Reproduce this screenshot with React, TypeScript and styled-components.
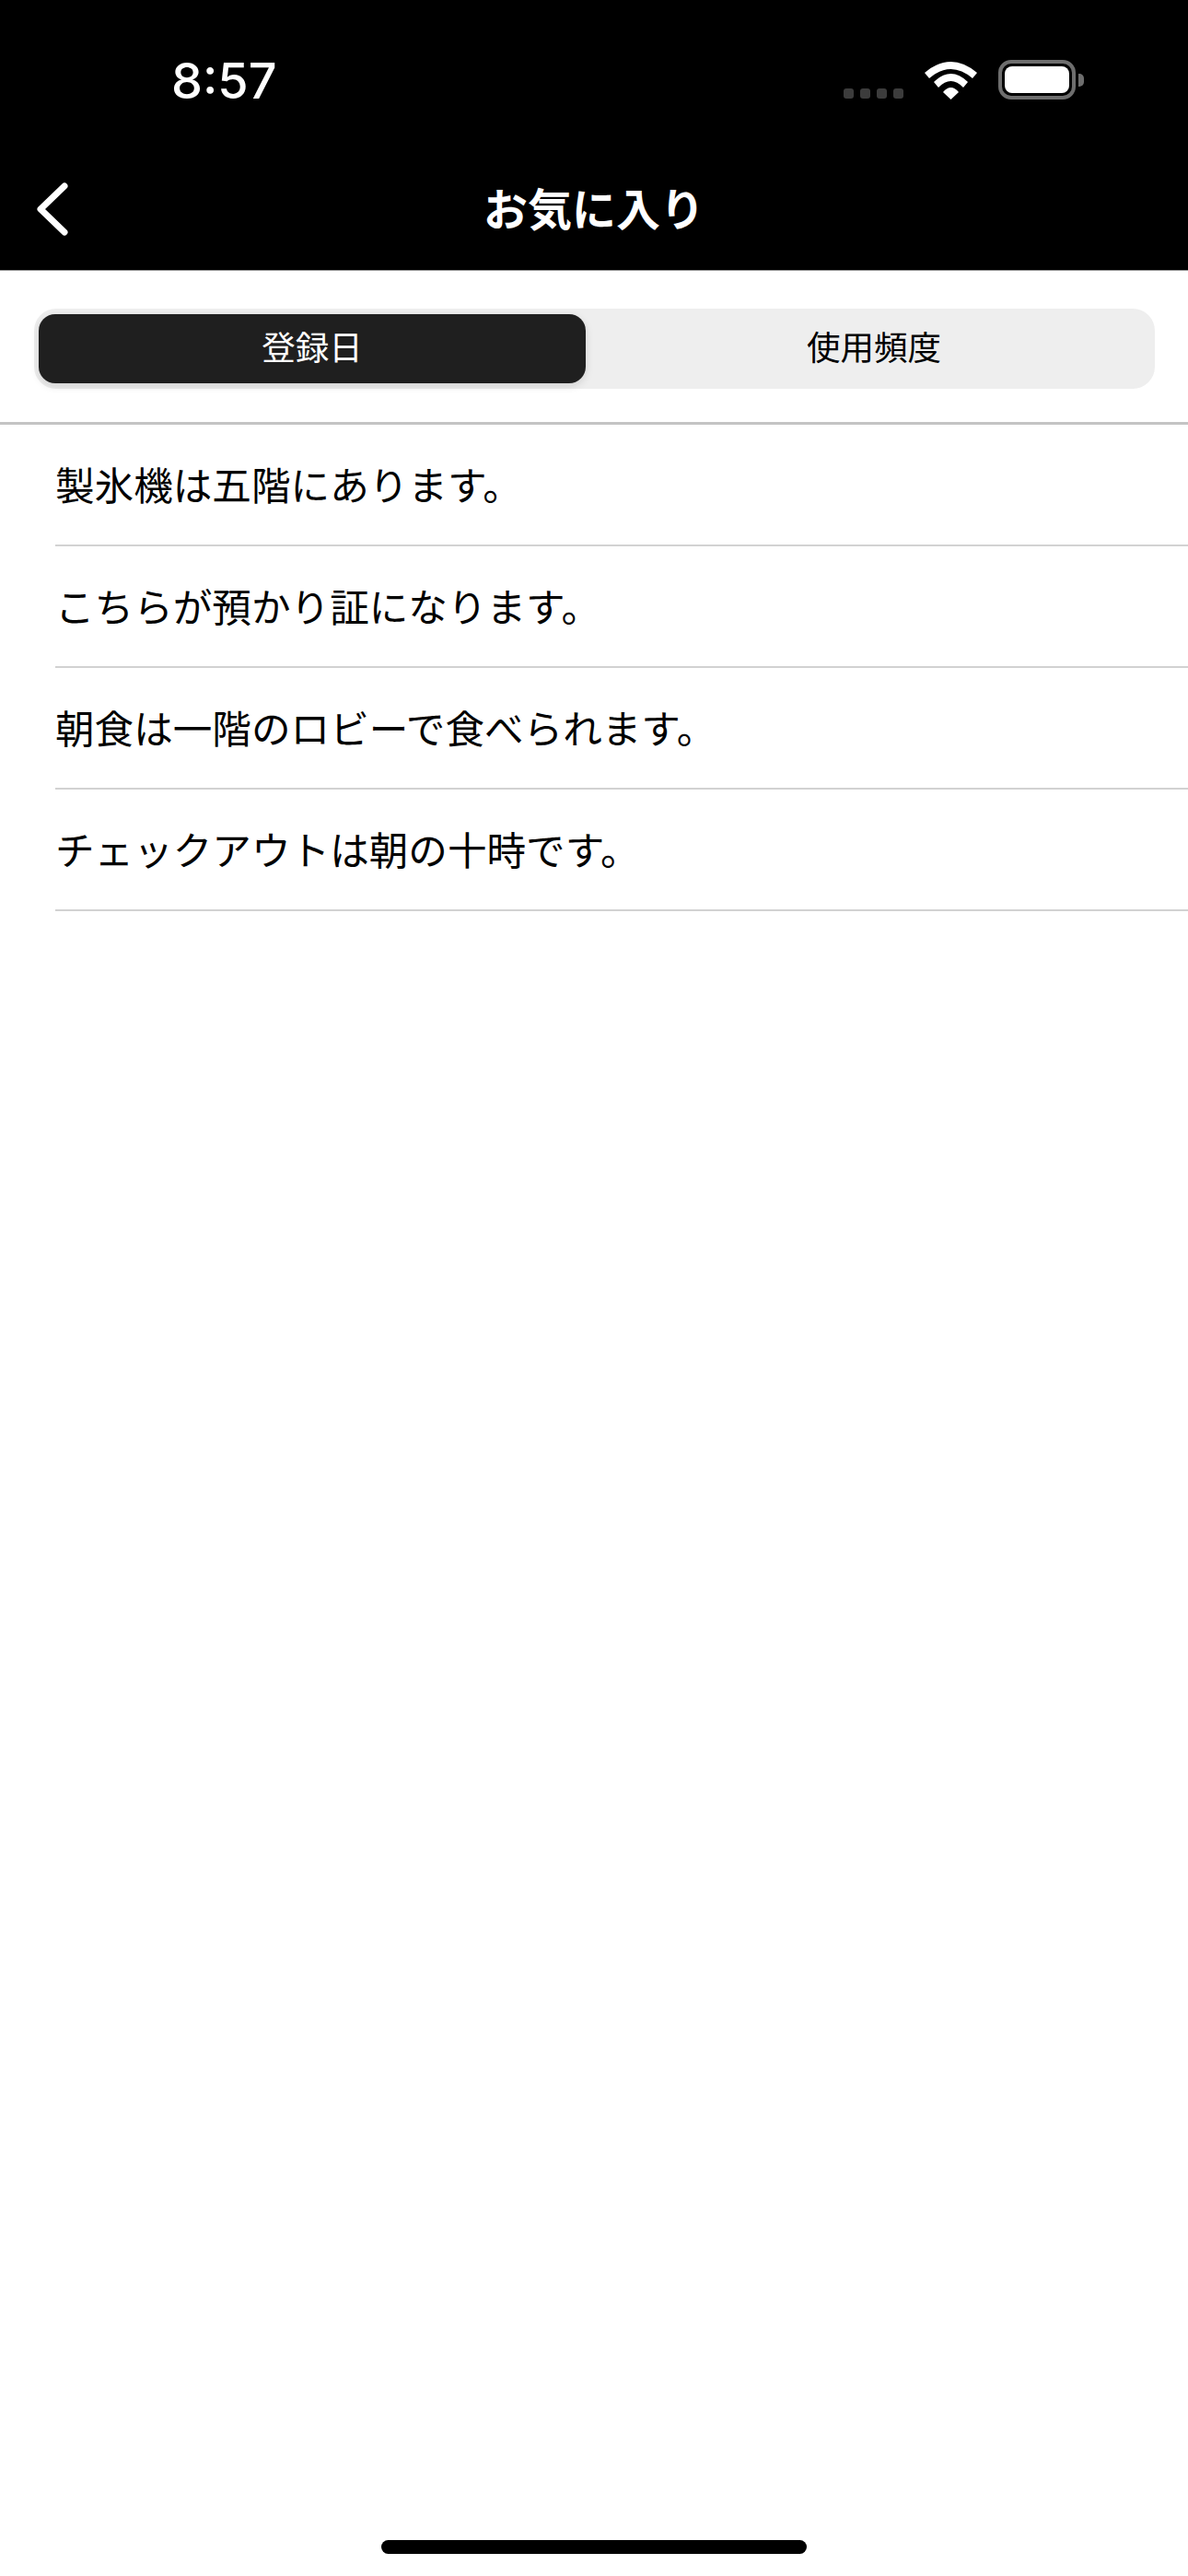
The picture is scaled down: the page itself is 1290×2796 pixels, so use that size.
import React from 'react';
import styled, { createGlobalStyle } from 'styled-components';

const GlobalStyle = createGlobalStyle`
  html, body { margin: 0; padding: 0; background: #fff; }
  * { box-sizing: border-box; }
`;

const Page = styled.div`
  display: flex;
  flex-direction: column;
  width: 1290px;
  height: 2796px;
  background: #fff;
  font-family: "Noto Sans CJK JP", "Liberation Sans", sans-serif;
  color: #000;
  overflow: hidden;
`;

const Header = styled.header`
  background: #000;
  height: 294px;
  border-bottom: 1px solid #9a9a9a;
  flex: none;
`;

const StatusBar = styled.div`
  display: flex;
  justify-content: space-between;
  align-items: flex-start;
  height: 160px;
  padding: 0 113px 0 186px;
`;

const Time = styled.div`
  font-family: Inter, "Liberation Sans", sans-serif;
  font-size: 54px;
  font-weight: 500;
  line-height: 54px;
  color: #fff;
  margin-top: 61px;
`;

const StatusIcons = styled.div`
  display: flex;
  align-items: flex-end;
  gap: 23px;
  margin-top: 65px;
`;

const Signal = styled.div`
  display: flex;
  gap: 7px;
  margin-bottom: 1px;
`;

const SignalDot = styled.span`
  width: 11px;
  height: 11px;
  border-radius: 3px;
  background: #3c3c3c;
`;

const Battery = styled.div`
  display: flex;
  align-items: center;
  gap: 3px;
`;

const BatteryBody = styled.div`
  display: flex;
  width: 84px;
  height: 43px;
  padding: 3px 3px;
  border: 4px solid #6e6e6e;
  border-radius: 14px;
`;

const BatteryFill = styled.div`
  flex: 1;
  background: #fff;
  border-radius: 8px;
`;

const BatteryCap = styled.div`
  width: 6px;
  height: 14px;
  background: #6e6e6e;
  border-radius: 0 5px 5px 0;
`;

const NavBar = styled.nav`
  display: grid;
  grid-template-columns: 1fr auto 1fr;
  align-items: center;
  height: 133px;
  padding: 0 40px;
`;

const BackButton = styled.button`
  display: flex;
  width: 34px;
  padding: 0;
  border: 0;
  background: none;
`;

const Title = styled.h1`
  margin: 0 0 6px;
  font-size: 48px;
  font-weight: 600;
  line-height: 70px;
  color: #fff;
`;

const SegmentWrap = styled.div`
  flex: none;
  height: 167px;
  padding: 41px 36px 0 37px;
  border-bottom: 3px solid #c4c4c4;
`;

const Segment = styled.div`
  display: grid;
  grid-template-columns: 594px 1fr;
  height: 87px;
  padding: 6px 0 6px 5px;
  background: #eeeeee;
  border-radius: 24px;
`;

const SegmentItem = styled.div<{ $active?: boolean }>`
  display: flex;
  align-items: center;
  justify-content: center;
  padding: ${(p) => (p.$active ? '0 0 5px' : '0 0 5px 8px')};
  font-size: 36.5px;
  line-height: 1;
  border-radius: 18px;
  color: ${(p) => (p.$active ? '#fff' : '#000')};
  background: ${(p) => (p.$active ? '#1f1f1f' : 'transparent')};
  box-shadow: ${(p) => (p.$active ? '0 3px 10px rgba(0, 0, 0, 0.12)' : 'none')};
`;

const List = styled.ul`
  flex: none;
  list-style: none;
  margin: 0;
  padding: 0 0 0 60px;
`;

const Row = styled.li`
  display: flex;
  align-items: center;
  height: 132px;
  padding-bottom: 2px;
  border-bottom: 2px solid #d2d2d2;
  font-size: 42.6px;
  line-height: 1;
`;

const Footer = styled.div`
  display: flex;
  justify-content: center;
  margin-top: auto;
  padding-bottom: 24px;
`;

const HomeBar = styled.div`
  width: 462px;
  height: 15px;
  border-radius: 8px;
  background: #000;
`;

const phrases = [
  '製氷機は五階にあります。',
  'こちらが預かり証になります。',
  '朝食は一階のロビーで食べられます。',
  'チェックアウトは朝の十時です。',
];

const WifiIcon = () => (
  <svg width="57" height="41" viewBox="0 0 57 41" fill="#fff">
    <path d="M0 12Q28.5-12 57 12L52 18Q28.5-2 5 18Z" />
    <path d="M10 22Q28.5 4 47 22L42 28Q28.5 14 15 28Z" />
    <path d="M20 33Q28.5 23 37 33L28.5 41Z" />
  </svg>
);

const BackIcon = () => (
  <svg width="34" height="58" viewBox="0 0 34 58" fill="none" stroke="#fff" strokeWidth="7" strokeLinecap="round" strokeLinejoin="round">
    <path d="M30 4L4 29L30 54" />
  </svg>
);

export default function App() {
  return (
    <Page>
      <GlobalStyle />
      <Header>
        <StatusBar>
          <Time>8:57</Time>
          <StatusIcons>
            <Signal>
              <SignalDot />
              <SignalDot />
              <SignalDot />
              <SignalDot />
            </Signal>
            <WifiIcon />
            <Battery>
              <BatteryBody>
                <BatteryFill />
              </BatteryBody>
              <BatteryCap />
            </Battery>
          </StatusIcons>
        </StatusBar>
        <NavBar>
          <BackButton aria-label="戻る">
            <BackIcon />
          </BackButton>
          <Title>お気に入り</Title>
        </NavBar>
      </Header>
      <SegmentWrap>
        <Segment>
          <SegmentItem $active>登録日</SegmentItem>
          <SegmentItem>使用頻度</SegmentItem>
        </Segment>
      </SegmentWrap>
      <List>
        {phrases.map((text) => (
          <Row key={text}>{text}</Row>
        ))}
      </List>
      <Footer>
        <HomeBar />
      </Footer>
    </Page>
  );
}
